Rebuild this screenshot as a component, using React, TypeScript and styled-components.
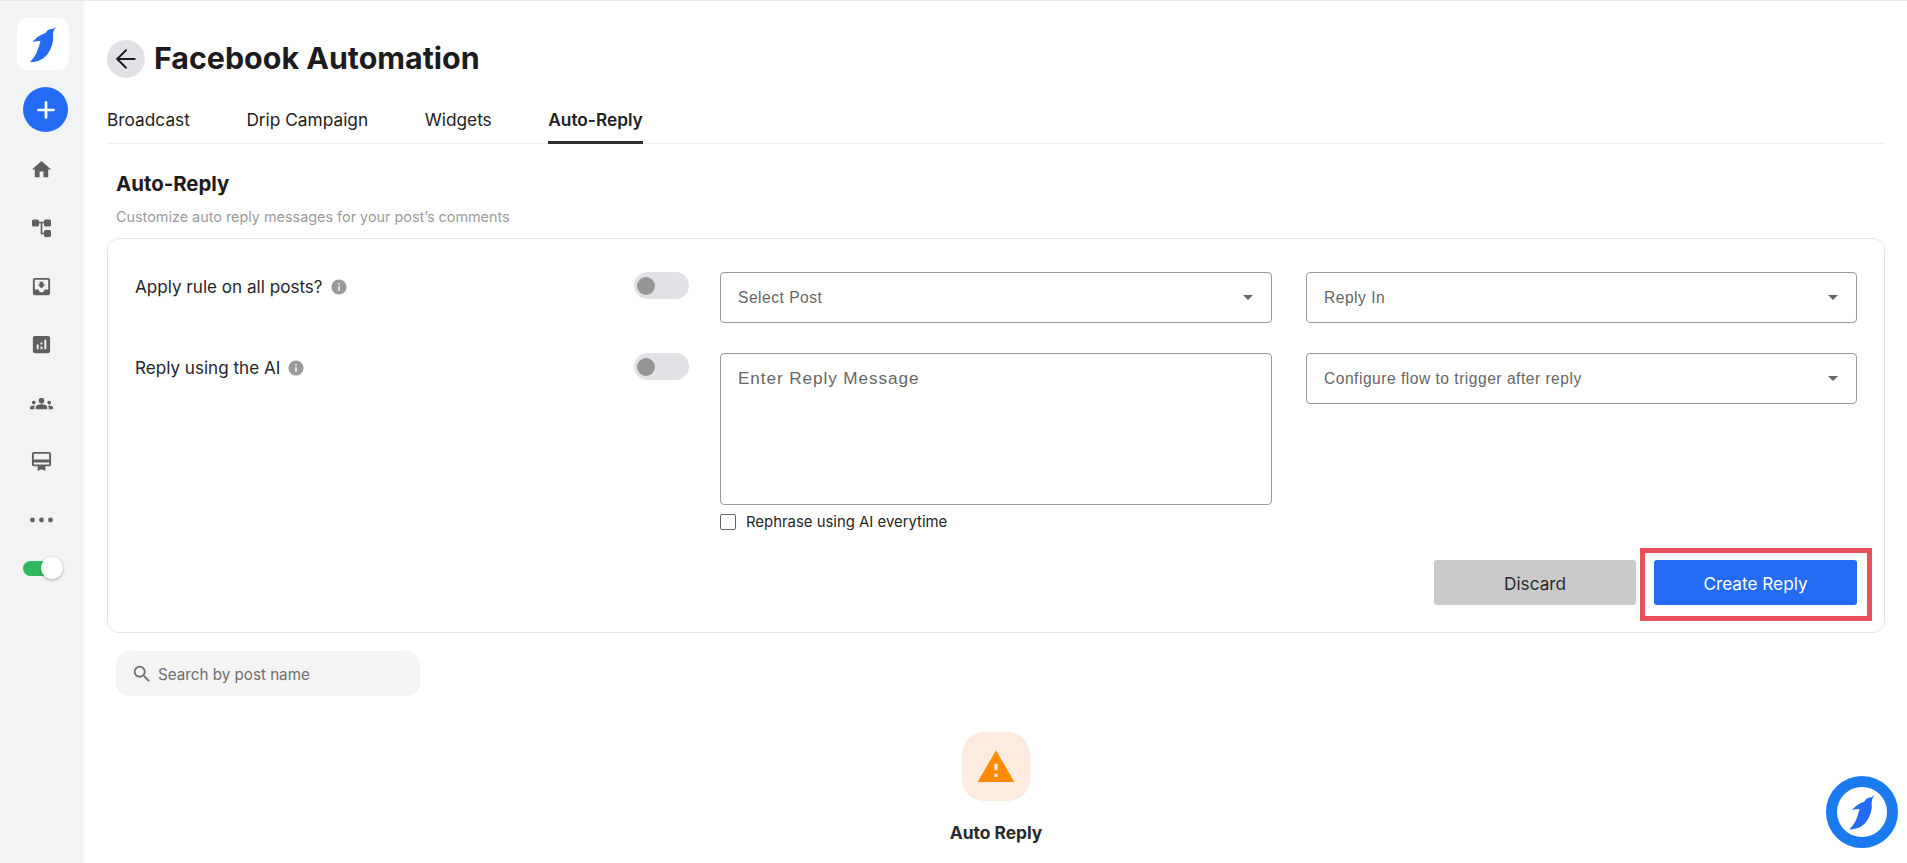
import React, { FC, ReactNode } from 'react'
import styled, { createGlobalStyle } from 'styled-components'
import { ArrowLeft, Plus } from 'lucide-react'
import {
  MdAnalytics,
  MdCardMembership,
  MdGroups,
  MdHome,
  MdInfo,
  MdMoveToInbox,
  MdSearch,
  MdWarning,
} from 'react-icons/md'

const BLUE = '#236bf5'
const FONT = 'Inter, "Noto Sans", sans-serif'
const FIELD_FONT = '"Liberation Sans", Arial, sans-serif'

const GlobalStyle = createGlobalStyle`
  html, body {
    margin: 0;
    height: 100%;
    overflow: hidden;
    background: #fff;
    font-family: ${FONT};
  }
  * { box-sizing: border-box; }
`

const Page = styled.div`
  display: flex;
  height: 863px;
  overflow: hidden;
  position: relative;
  border-top: 1px solid #e8e8ea;
`

const Sidebar = styled.aside`
  flex: 0 0 82px;
  display: flex;
  flex-direction: column;
  padding-top: 17px;
  background: #f2f3f5;
  box-shadow: 1px 0 2px rgba(0, 0, 0, 0.06);
`

const LogoBox = styled.div`
  width: 52px;
  height: 52px;
  margin-left: 17px;
  border-radius: 10px;
  background: #fff;
`

const AddButton = styled.div`
  display: flex;
  align-items: center;
  justify-content: center;
  width: 45px;
  height: 45px;
  margin: 17px 0 8px 23px;
  border-radius: 50%;
  background: ${BLUE};
  color: #fff;
`

const NavItem = styled.div`
  display: flex;
  align-items: center;
  justify-content: center;
  width: 83px;
  height: 58.5px;
  color: #5f5f5f;
`

const ThemeToggle = styled.div`
  position: relative;
  width: 40px;
  height: 15px;
  margin: 11px 0 0 23px;
  border-radius: 8px;
  background: #2fb85c;

  &::after {
    content: '';
    position: absolute;
    top: -4px;
    left: 18px;
    width: 22px;
    height: 22px;
    border-radius: 50%;
    background: #fff;
    box-shadow: 0 1px 3px rgba(0, 0, 0, 0.3);
  }
`

const Main = styled.main`
  flex: 1;
  min-width: 0;
  padding: 38px 22px 0 24px;
`

const TitleRow = styled.div`
  display: flex;
  align-items: center;
  gap: 9px;
  height: 39px;
`

const BackButton = styled.div`
  display: flex;
  align-items: center;
  justify-content: center;
  width: 38px;
  height: 38px;
  border-radius: 50%;
  background: #e1e2e6;
  color: #1d1d1f;
`

const Title = styled.h1`
  margin: 0;
  font-size: 30.4px;
  font-weight: 700;
  line-height: 39px;
  color: #1c1c1e;
`

const Tabs = styled.nav`
  display: flex;
  gap: 56.5px;
  height: 44px;
  margin-top: 22px;
  border-bottom: 1px solid #eeeeee;
`

const Tab = styled.div<{ $active?: boolean }>`
  height: 44px;
  padding-top: 9px;
  border-bottom: 3px solid ${({ $active }) => ($active ? '#2f2f2f' : 'transparent')};
  font-size: 17.3px;
  line-height: 22px;
  font-weight: ${({ $active }) => ($active ? 600 : 400)};
  color: #222;
`

const SectionHead = styled.div`
  padding: 27px 0 0 9px;
`

const SectionTitle = styled.h2`
  margin: 0;
  font-size: 20.4px;
  font-weight: 700;
  line-height: 26px;
  color: #1c1c1e;
`

const SectionSub = styled.p`
  margin: 11px 0 0;
  font-size: 14.4px;
  line-height: 18px;
  color: #9b9b9b;
`

const Card = styled.section`
  margin-top: 12px;
  padding: 33px 27px 27px 27px;
  border: 1px solid #e4e4e6;
  border-radius: 12px;
`

const Row = styled.div`
  display: flex;
  align-items: flex-start;
  margin-bottom: 30px;
`

const LabelCell = styled.div`
  display: flex;
  align-items: flex-start;
  justify-content: space-between;
  flex: 0 0 554px;
  margin-right: 31px;
`

const Label = styled.div`
  display: flex;
  align-items: center;
  gap: 7px;
  padding-top: 1px;
  font-size: 17.1px;
  line-height: 27px;
  color: #26262a;
`

const InfoIcon = styled(MdInfo)`
  color: #999;
`

const Switch = styled.div`
  display: flex;
  align-items: center;
  width: 55px;
  height: 27px;
  padding-left: 3px;
  border-radius: 14px;
  background: #e1e2e6;

  &::before {
    content: '';
    width: 18px;
    height: 18px;
    border-radius: 50%;
    background: #969696;
  }
`

const MidCell = styled.div`
  flex: 0 0 552px;
  margin-right: 34px;
`

const RightCell = styled.div`
  flex: 0 0 551px;
`

const Select = styled.div`
  display: flex;
  align-items: center;
  justify-content: space-between;
  height: 51px;
  padding: 0 18px 0 17px;
  border: 1px solid #999;
  border-radius: 4px;
  background: #fff;
  font-family: ${FIELD_FONT};
  font-size: 15.6px;
  letter-spacing: 0.5px;
  color: #666;

  &::after {
    content: '';
    border-left: 5px solid transparent;
    border-right: 5px solid transparent;
    border-top: 5px solid #666;
  }
`

const MessageBox = styled.textarea`
  display: block;
  width: 100%;
  height: 152px;
  padding: 14px 17px;
  border: 1px solid #999;
  border-radius: 4px;
  resize: none;
  outline: none;
  font-family: ${FIELD_FONT};
  font-size: 17.2px;
  line-height: 20px;
  letter-spacing: 0.9px;

  &::placeholder {
    color: #666;
    opacity: 1;
  }
`

const CheckRow = styled.label`
  display: flex;
  align-items: center;
  gap: 10px;
  height: 17px;
  margin-top: 8px;
  font-size: 14.9px;
  color: #26262a;
`

const CheckBox = styled.span`
  width: 16px;
  height: 16px;
  border: 1.5px solid #666;
  border-radius: 2px;
  background: #fff;
`

const Actions = styled.div`
  display: flex;
  justify-content: flex-end;
  gap: 18px;
`

const Button = styled.button<{ $primary?: boolean }>`
  position: relative;
  width: ${({ $primary }) => ($primary ? 203 : 202)}px;
  height: 45px;
  padding: 1px 0 0;
  border: 0;
  border-radius: 3px;
  background: ${({ $primary }) => ($primary ? BLUE : '#cacaca')};
  font-family: ${FONT};
  font-size: 17.2px;
  color: ${({ $primary }) => ($primary ? '#fff' : '#2b2b2b')};
`

const Highlight = styled.span`
  position: absolute;
  top: -12px;
  left: -14px;
  width: 232px;
  height: 73px;
  border: 5px solid #e8505a;
  pointer-events: none;
`

const SearchBox = styled.div`
  display: flex;
  align-items: center;
  gap: 5px;
  width: 304px;
  height: 45px;
  margin: 18px 0 0 9px;
  padding: 1px 0 0 15px;
  border-radius: 14px;
  background: #f4f4f4;
  font-size: 15.2px;
  color: #6f6f6f;
`

const Empty = styled.div`
  display: flex;
  flex-direction: column;
  align-items: center;
  margin-top: 36px;
`

const EmptyIcon = styled.div`
  display: flex;
  align-items: center;
  justify-content: center;
  width: 68px;
  height: 69px;
  border-radius: 22px;
  background: #fdebe0;
  color: #ff8a00;
`

const EmptyTitle = styled.div`
  margin-top: 22px;
  font-size: 17.4px;
  font-weight: 700;
  line-height: 20px;
  color: #2a2a2e;
`

const ChatBubble = styled.div`
  position: absolute;
  right: 9px;
  bottom: 15px;
  display: flex;
  align-items: center;
  justify-content: center;
  width: 72px;
  height: 72px;
  border: 11px solid #1a7bf0;
  border-radius: 50%;
  background: #fff;
`

const Penguin: FC<{ size: number }> = ({ size }) => (
  <svg width={size} height={size} viewBox="0 0 52 52" fill={BLUE}>
    <path d="M39 8.7 L35.5 11 Q31 10.5 28.5 15 Q21 17.5 15.5 24 Q19 23 23.5 23 Q22 29 19.5 35 Q17 40 13 44 Q16 44.5 21 43 Q29 40.5 33 32 Q37 24 36 17 Q36 12 39 8.7Z" />
  </svg>
)

const FlowIcon: FC = () => (
  <svg width={19} height={18} viewBox="0 0 19 18" fill="currentColor">
    <rect x="0" y="0.5" width="7" height="7" rx="1.5" />
    <rect x="12" y="0.5" width="7" height="7" rx="1.5" />
    <rect x="12" y="11" width="7" height="7" rx="1.5" />
    <path d="M7 3.5H12M9.5 3.5V14.5H12" fill="none" stroke="currentColor" strokeWidth="1.6" />
  </svg>
)

const DotsIcon: FC = () => (
  <svg width={23} height={6} viewBox="0 0 23 6" fill="currentColor">
    <circle cx="2.5" cy="3" r="2.4" />
    <circle cx="11.5" cy="3" r="2.4" />
    <circle cx="20.5" cy="3" r="2.4" />
  </svg>
)

const navIcons: ReactNode[] = [
  <MdHome size={23} />,
  <FlowIcon />,
  <MdMoveToInbox size={23} />,
  <MdAnalytics size={23} />,
  <MdGroups size={23} />,
  <MdCardMembership size={23} />,
  <DotsIcon />,
]

const tabs = ['Broadcast', 'Drip Campaign', 'Widgets', 'Auto-Reply']

const App: FC = () => (
  <Page>
    <GlobalStyle />
    <Sidebar>
      <LogoBox>
        <Penguin size={52} />
      </LogoBox>
      <AddButton>
        <Plus size={26} strokeWidth={2.5} />
      </AddButton>
      {navIcons.map((icon, i) => (
        <NavItem key={i}>{icon}</NavItem>
      ))}
      <ThemeToggle />
    </Sidebar>
    <Main>
      <TitleRow>
        <BackButton>
          <ArrowLeft size={30} strokeWidth={1.5} />
        </BackButton>
        <Title>Facebook Automation</Title>
      </TitleRow>
      <Tabs>
        {tabs.map((tab) => (
          <Tab key={tab} $active={tab === 'Auto-Reply'}>
            {tab}
          </Tab>
        ))}
      </Tabs>
      <SectionHead>
        <SectionTitle>Auto-Reply</SectionTitle>
        <SectionSub>Customize auto reply messages for your post’s comments</SectionSub>
      </SectionHead>
      <Card>
        <Row>
          <LabelCell>
            <Label>
              Apply rule on all posts? <InfoIcon size={18} />
            </Label>
            <Switch />
          </LabelCell>
          <MidCell>
            <Select>Select Post</Select>
          </MidCell>
          <RightCell>
            <Select>Reply In</Select>
          </RightCell>
        </Row>
        <Row>
          <LabelCell>
            <Label>
              Reply using the AI <InfoIcon size={18} />
            </Label>
            <Switch />
          </LabelCell>
          <MidCell>
            <MessageBox placeholder="Enter Reply Message" />
            <CheckRow>
              <CheckBox />
              Rephrase using AI everytime
            </CheckRow>
          </MidCell>
          <RightCell>
            <Select>Configure flow to trigger after reply</Select>
          </RightCell>
        </Row>
        <Actions>
          <Button>Discard</Button>
          <Button $primary>
            Create Reply
            <Highlight />
          </Button>
        </Actions>
      </Card>
      <SearchBox>
        <MdSearch size={22} />
        Search by post name
      </SearchBox>
      <Empty>
        <EmptyIcon>
          <MdWarning size={40} />
        </EmptyIcon>
        <EmptyTitle>Auto Reply</EmptyTitle>
      </Empty>
    </Main>
    <ChatBubble>
      <Penguin size={50} />
    </ChatBubble>
  </Page>
)

export default App
